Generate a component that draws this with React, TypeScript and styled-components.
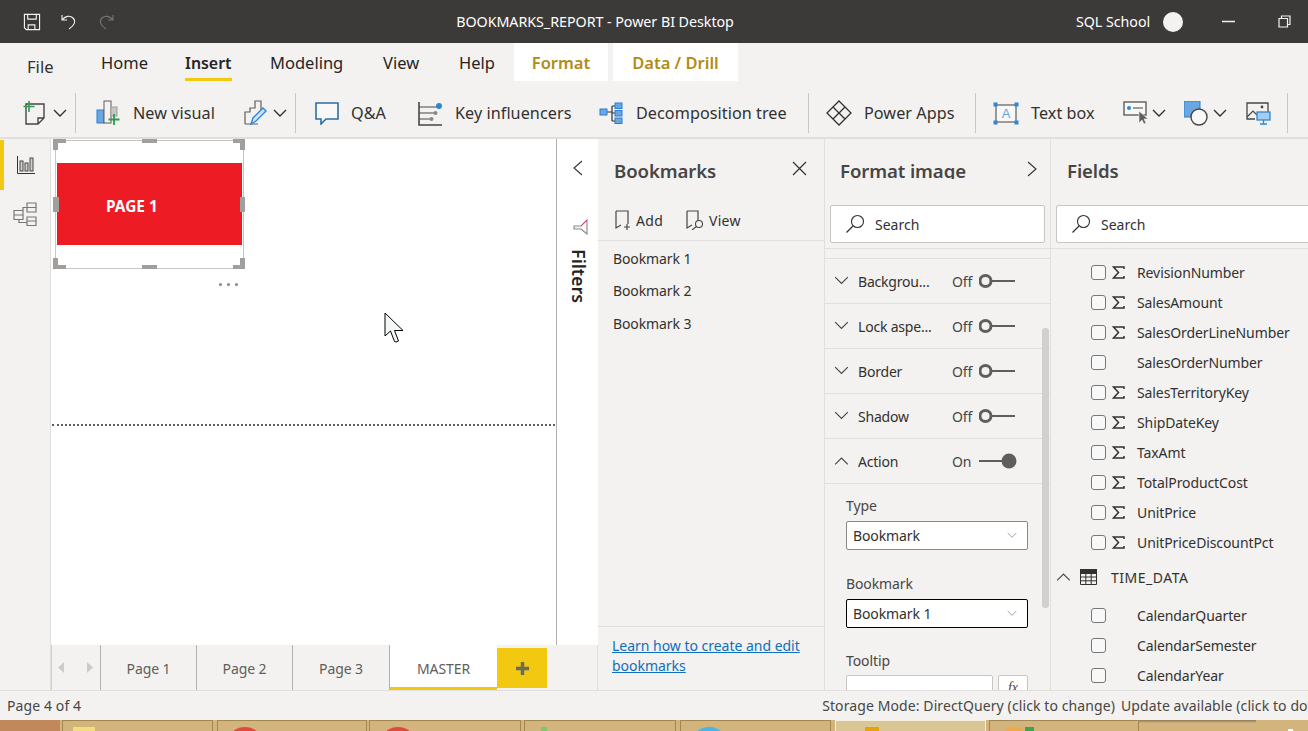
import React from "react";
import styled, { createGlobalStyle } from "styled-components";

const GlobalStyle = createGlobalStyle`
  html, body {
    margin: 0;
    padding: 0;
    overflow: hidden;
    background: #f3f2f1;
  }
  * {
    box-sizing: border-box;
  }
`;

const FONT = `"Noto Sans", "Open Sans", "Liberation Sans", sans-serif`;

const Page = styled.div`
  width: 1308px;
  height: 731px;
  display: flex;
  flex-direction: column;
  overflow: hidden;
  font-family: ${FONT};
  color: #252423;
  background: #f3f2f1;
`;

// ---------------------- title bar ---------------------- //

const TitleBar = styled.div`
  height: 43px;
  flex: none;
  display: flex;
  align-items: center;
  background: #3b3a39;
  color: #fff;
`;

const QuickIcon = styled.svg<{ $ml: number }>`
  margin-left: ${(p) => p.$ml}px;
  flex: none;
`;

const WindowTitle = styled.div`
  width: 280px;
  margin-left: 340px;
  font-size: 14.3px;
  letter-spacing: -0.05px;
  text-align: center;
  white-space: nowrap;
`;

const UserName = styled.div`
  margin-left: auto;
  width: 76px;
  font-size: 14.2px;
  white-space: nowrap;
`;

const Avatar = styled.div`
  width: 20px;
  height: 20px;
  margin-left: 11px;
  margin-right: 39px;
  border-radius: 50%;
  background: #f3f2f1;
`;

const RestoreSlot = styled.div`
  margin: 0 17px 0 43px;
  display: flex;
`;

// ---------------------- ribbon ---------------------- //

const TabRow = styled.div`
  height: 50px;
  flex: none;
  display: flex;
  align-items: flex-start;
`;

const FileTab = styled.div`
  width: 47px;
  margin: 13px 0 0 27px;
  font-size: 16.6px;
  color: #323130;
  line-height: 22px;
`;

const RibbonTab = styled.div<{ $ml: number; $w: number; $active?: boolean }>`
  margin-left: ${(p) => p.$ml}px;
  width: ${(p) => p.$w}px;
  padding-top: 9px;
  height: 38px;
  font-size: ${(p) => (p.$active ? 15.9 : 16.5)}px;
  line-height: 22px;
  color: #252423;
  white-space: nowrap;
  font-weight: ${(p) => (p.$active ? 600 : 400)};
  border-bottom: 3px solid ${(p) => (p.$active ? "#f2c811" : "transparent")};
`;

const ContextTab = styled.div<{ $w: number; $ml: number }>`
  width: ${(p) => p.$w}px;
  margin-left: ${(p) => p.$ml}px;
  height: 38px;
  padding-top: 9px;
  background: #fff;
  color: #b08c14;
  font-size: 16.5px;
  font-weight: 600;
  line-height: 22px;
  text-align: center;
  white-space: nowrap;
`;

const ToolBar = styled.div`
  height: 46px;
  flex: none;
  display: flex;
  align-items: center;
  border-bottom: 2px solid #e1dfdd;
  padding-bottom: 4px;
`;

const ToolIcon = styled.svg<{ $ml: number }>`
  margin-left: ${(p) => p.$ml}px;
  flex: none;
`;

const ToolLabel = styled.span<{ $ml: number; $w: number }>`
  margin-left: ${(p) => p.$ml}px;
  width: ${(p) => p.$w}px;
  flex: none;
  font-size: 16.2px;
  line-height: 22px;
  letter-spacing: 0.05px;
  white-space: nowrap;
  color: #323130;
`;

const ToolSep = styled.div<{ $ml: number }>`
  margin-left: ${(p) => p.$ml}px;
  width: 1px;
  height: 40px;
  flex: none;
  background: #c8c6c4;
`;

// ---------------------- main area ---------------------- //

const Main = styled.div`
  flex: none;
  height: 551px;
  display: flex;
`;

const Rail = styled.div`
  width: 51px;
  flex: none;
  padding-top: 1px;
  border-right: 1px solid #e1dfdd;
  display: flex;
  flex-direction: column;
`;

const RailItem = styled.div<{ $active?: boolean }>`
  height: ${(p) => (p.$active ? 50 : 48)}px;
  display: flex;
  align-items: center;
  justify-content: center;
  padding-right: ${(p) => (p.$active ? 2 : 0)}px;
  border-left: ${(p) => (p.$active ? "4px solid #f2c811" : "none")};
`;

const ReportColumn = styled.div`
  width: 547px;
  flex: none;
  display: flex;
  flex-direction: column;
`;

const CanvasRow = styled.div`
  flex: 1;
  display: flex;
  min-height: 0;
`;

const Canvas = styled.div`
  position: relative;
  width: 505px;
  flex: none;
  background: #fff;
  overflow: hidden;
`;

const ImageVisual = styled.div`
  position: absolute;
  left: 4px;
  top: 1px;
  width: 189px;
  height: 129px;
  border: 1px solid #c8c6c4;
`;

const RedBanner = styled.div`
  position: absolute;
  left: 1px;
  right: 1px;
  top: 22px;
  height: 82px;
  background: #ed1c24;
  color: #fff;
  font-size: 15.4px;
  font-weight: 700;
  line-height: 88px;
  padding-left: 49px;
  white-space: nowrap;
`;

const Handle = styled.div<{ $x: number; $y: number; $w: number; $h: number }>`
  position: absolute;
  left: ${(p) => p.$x}px;
  top: ${(p) => p.$y}px;
  width: ${(p) => p.$w}px;
  height: ${(p) => p.$h}px;
  background: #a19f9d;
`;

const MoreDots = styled.div`
  position: absolute;
  left: 168px;
  top: 144px;
  display: flex;
  gap: 5px;
`;

const Dot = styled.span`
  width: 3px;
  height: 3px;
  border-radius: 50%;
  background: #8a8886;
`;

const PageGuide = styled.div`
  position: absolute;
  left: 1px;
  right: 1px;
  top: 285px;
  border-top: 2px dotted #605e5c;
`;

const Cursor = styled.svg`
  position: absolute;
  left: 333px;
  top: 173px;
`;

const FiltersStrip = styled.div`
  width: 42px;
  flex: none;
  background: #fff;
  border-left: 1px solid #b3b0ad;
  display: flex;
  flex-direction: column;
  align-items: center;
  padding-top: 21px;
`;

const FiltersLabel = styled.div`
  margin-top: 14px;
  margin-left: 2px;
  writing-mode: vertical-rl;
  font-size: 17.9px;
  font-weight: 600;
  line-height: 20px;
  color: #252423;
`;

const PageTabs = styled.div`
  height: 45px;
  flex: none;
  display: flex;
  align-items: stretch;
  border-left: 1px solid #d2d0ce;
  border-right: 1px solid #e1dfdd;
`;

const PagerArrows = styled.div`
  width: 48px;
  flex: none;
  display: flex;
  align-items: center;
  justify-content: space-between;
  padding: 0 7px 0 6px;
`;

const PageTab = styled.div<{ $w: number; $active?: boolean }>`
  width: ${(p) => p.$w}px;
  flex: none;
  display: flex;
  align-items: center;
  justify-content: center;
  padding-top: ${(p) => (p.$active ? 4 : 2)}px;
  font-size: 14px;
  letter-spacing: -0.1px;
  color: #605e5c;
  border-left: 1px solid #b3b0ad;
  background: ${(p) => (p.$active ? "#fff" : "transparent")};
  border-bottom: ${(p) => (p.$active ? "3px solid #f2c811" : "none")};
`;

const AddPage = styled.div`
  width: 50px;
  height: 40px;
  margin-top: 3px;
  flex: none;
  display: flex;
  align-items: center;
  justify-content: center;
  background: #f2c811;
`;

// ---------------------- bookmarks pane ---------------------- //

const BookmarksPane = styled.div`
  width: 227px;
  flex: none;
  display: flex;
  flex-direction: column;
  border-right: 1px solid #e1dfdd;
`;

const PaneHeader = styled.div`
  height: 66px;
  flex: none;
  position: relative;
  display: flex;
  align-items: flex-start;
  justify-content: space-between;
  padding-top: 17px;
`;

const PaneTitle = styled.div<{ $ml: number }>`
  margin-left: ${(p) => p.$ml}px;
  height: 22px;
  overflow: hidden;
  font-size: 18.6px;
  font-weight: 600;
  line-height: 27px;
  letter-spacing: -0.1px;
  margin-top: 1px;
  color: #484644;
  white-space: nowrap;
`;

const HeaderIcon = styled.svg<{ $mr: number }>`
  margin-right: ${(p) => p.$mr}px;
  margin-top: 5px;
  flex: none;
`;

const BookmarkActions = styled.div`
  height: 36px;
  flex: none;
  display: flex;
  align-items: flex-start;
  padding: 5px 0 0 17px;
  border-bottom: 1px solid #e1dfdd;
`;

const ActionLabel = styled.span<{ $w: number }>`
  width: ${(p) => p.$w}px;
  margin-left: 5px;
  padding-top: 1px;
  font-size: 14px;
  line-height: 20px;
  letter-spacing: 0.3px;
  white-space: nowrap;
  color: #323130;
`;

const BookmarkList = styled.div`
  flex: 1;
  padding-top: 2px;
  min-height: 0;
`;

const BookmarkRow = styled.div`
  height: 32.4px;
  padding-left: 15px;
  font-size: 14px;
  letter-spacing: -0.1px;
  line-height: 32px;
  color: #323130;
`;

const LearnLink = styled.a`
  display: block;
  height: 64px;
  flex: none;
  padding: 9px 10px 0 14px;
  border-top: 1px solid #e1dfdd;
  font-size: 14px;
  letter-spacing: -0.02px;
  line-height: 20px;
  color: #106ebe;
  text-decoration: underline;
`;

// ---------------------- format pane ---------------------- //

const FormatPane = styled.div`
  width: 226px;
  flex: none;
  display: flex;
  flex-direction: column;
  border-right: 1px solid #e1dfdd;
`;

const SearchBox = styled.div<{ $w: number; $ml: number }>`
  width: ${(p) => p.$w}px;
  margin-left: ${(p) => p.$ml}px;
  height: 38px;
  flex: none;
  display: flex;
  align-items: center;
  gap: 10px;
  padding-left: 14px;
  background: #fff;
  border: 1px solid #c8c6c4;
  border-radius: 2px;
  font-size: 14px;
  color: #323130;
`;

const SearchGap = styled.div`
  height: 6px;
  flex: none;
  border-bottom: 1px solid #e1dfdd;
`;

const FormatScroll = styled.div`
  position: relative;
  flex: 1;
  min-height: 0;
  overflow: hidden;
`;

const FormatTopGap = styled.div`
  height: 10px;
  border-bottom: 1px solid #e1dfdd;
`;

const CardRow = styled.div`
  height: 45px;
  display: flex;
  align-items: center;
  padding-left: 9px;
  border-bottom: 1px solid #e1dfdd;
`;

const CardName = styled.span`
  width: 94px;
  margin-left: 9px;
  font-size: 14px;
  letter-spacing: -0.2px;
  white-space: nowrap;
  color: #323130;
`;

const OnOff = styled.span`
  width: 27px;
  font-size: 14px;
  letter-spacing: -0.1px;
  color: #484644;
`;

const Toggle = styled.svg`
  flex: none;
`;

const ActionBody = styled.div`
  padding: 12px 0 0 21px;
`;

const FieldLabel = styled.div<{ $mt?: number }>`
  margin-top: ${(p) => p.$mt ?? 0}px;
  font-size: 14px;
  letter-spacing: -0.1px;
  line-height: 20px;
  color: #484644;
`;

const SelectBox = styled.div<{ $focus?: boolean }>`
  width: 182px;
  height: 29px;
  margin-top: 5px;
  display: flex;
  align-items: center;
  justify-content: space-between;
  padding: 0 10px 0 6px;
  background: #fff;
  border: 1px solid ${(p) => (p.$focus ? "#000" : "#8a8886")};
  border-radius: 2px;
  font-size: 14px;
  letter-spacing: -0.1px;
  color: #323130;
`;

const TooltipRow = styled.div`
  display: flex;
  gap: 5px;
  margin-top: 4px;
`;

const TooltipInput = styled.div`
  width: 147px;
  height: 30px;
  background: #fff;
  border: 1px solid #c8c6c4;
  border-radius: 2px;
`;

const FxButton = styled.div`
  width: 30px;
  height: 30px;
  background: #fff;
  border: 1px solid #c8c6c4;
  border-radius: 2px;
  text-align: center;
  font-family: "Liberation Serif", serif;
  font-style: italic;
  font-size: 14px;
  line-height: 24px;
  color: #484644;
`;

const ScrollThumb = styled.div`
  position: absolute;
  right: 1px;
  top: 79px;
  width: 7px;
  height: 280px;
  border-radius: 3px;
  background: #d2d0ce;
`;

// ---------------------- fields pane ---------------------- //

const FieldsPane = styled.div`
  flex: 1;
  min-width: 0;
  display: flex;
  flex-direction: column;
  overflow: hidden;
`;

const FieldsList = styled.div`
  flex: 1;
  min-height: 0;
  overflow: hidden;
  padding-top: 8px;
`;

const FieldRow = styled.div`
  height: 30px;
  display: flex;
  align-items: center;
  padding-left: 40px;
`;

const CheckBox = styled.div`
  width: 15px;
  height: 15px;
  flex: none;
  border: 1px solid #797775;
  border-radius: 3px;
  background: #f8f8f8;
`;

const SigmaSlot = styled.div`
  width: 31px;
  padding-left: 6px;
  flex: none;
  display: flex;
`;

const FieldName = styled.span`
  font-size: 14px;
  letter-spacing: -0.1px;
  white-space: nowrap;
  color: #323130;
`;

const TableRow = styled.div`
  height: 40px;
  margin-bottom: 3px;
  display: flex;
  align-items: center;
  padding-left: 5px;
`;

const TableName = styled.span`
  margin-left: 14px;
  font-size: 14px;
  letter-spacing: 0.5px;
  color: #323130;
`;

// ---------------------- status + taskbar ---------------------- //

const StatusBar = styled.div`
  height: 30px;
  flex: none;
  display: flex;
  align-items: center;
  border-top: 1px solid #e1dfdd;
  padding-left: 7px;
  font-size: 14px;
  letter-spacing: 0.1px;
  color: #484644;
  white-space: nowrap;
  overflow: hidden;
`;

const StatusRight = styled.div`
  margin-left: 741px;
  display: flex;
  gap: 6px;
`;

const TaskBar = styled.div`
  position: relative;
  height: 11px;
  flex: none;
  display: flex;
  background: #d2b47c;
  overflow: hidden;
`;

const StartCorner = styled.div`
  width: 60px;
  flex: none;
  background: #c1885c;
`;

const TaskItem = styled.div<{ $w: number; $ml: number; $active?: boolean }>`
  position: relative;
  width: ${(p) => p.$w}px;
  margin-left: ${(p) => p.$ml}px;
  height: 14px;
  flex: none;
  border: 1px solid ${(p) => (p.$active ? "#f5efe0" : "#a08850")};
  background: ${(p) => (p.$active ? "#d8c794" : "#d2b47c")};
`;

const TaskGlyph = styled.div<{ $x: number; $w: number; $c: string; $round?: boolean }>`
  position: absolute;
  left: ${(p) => p.$x}px;
  top: 6px;
  width: ${(p) => p.$w}px;
  height: 16px;
  background: ${(p) => p.$c};
  border-radius: ${(p) => (p.$round ? "50%" : "0")};
`;

const WindowShadow = styled.div`
  position: absolute;
  left: 1139px;
  top: 0;
  width: 117px;
  height: 3px;
  background: linear-gradient(#8c7a52, rgba(140, 122, 82, 0));
`;

const ClockTip = styled.div`
  position: absolute;
  left: 1288px;
  bottom: 0;
  width: 5px;
  height: 2px;
  background: #fff;
`;

// -------------------------------------------------------------------- //

const Chevron = ({ size = 14, up = false, color = "#323130" }: { size?: number; up?: boolean; color?: string }) => (
  <svg width={size} height={size / 2 + 2} viewBox="0 0 14 9" style={{ flex: "none" }}>
    <path d={up ? "M1 8L7 2l6 6" : "M1 1l6 6 6-6"} fill="none" stroke={color} strokeWidth="1.1" />
  </svg>
);

const SearchIcon = () => (
  <svg width="20" height="20" viewBox="0 0 20 20" style={{ flex: "none" }}>
    <circle cx="12.5" cy="7.5" r="6" fill="none" stroke="#323130" strokeWidth="1.1" />
    <path d="M8 12L1.5 18.5" stroke="#323130" strokeWidth="1.3" />
  </svg>
);

const Sigma = () => (
  <svg width="13" height="13" viewBox="0 0 13 13">
    <path d="M12 3V1H1.5l5 5.5-5 5.5H12V10" fill="none" stroke="#323130" strokeWidth="1.5" />
  </svg>
);

const OffToggle = () => (
  <Toggle width="36" height="16" viewBox="0 0 36 16">
    <path d="M12 8h24" stroke="#605e5c" strokeWidth="2" />
    <circle cx="6.5" cy="8" r="5.5" fill="#f3f2f1" stroke="#605e5c" strokeWidth="3" />
  </Toggle>
);

const OnToggle = () => (
  <Toggle width="38" height="16" viewBox="0 0 38 16">
    <path d="M0 8h24" stroke="#605e5c" strokeWidth="2" />
    <circle cx="30" cy="8" r="7.5" fill="#605e5c" />
  </Toggle>
);

const cards = [
  { name: "Backgrou..." },
  { name: "Lock aspe..." },
  { name: "Border" },
  { name: "Shadow" },
];

const measures = [
  { name: "RevisionNumber", sum: true },
  { name: "SalesAmount", sum: true },
  { name: "SalesOrderLineNumber", sum: true },
  { name: "SalesOrderNumber", sum: false },
  { name: "SalesTerritoryKey", sum: true },
  { name: "ShipDateKey", sum: true },
  { name: "TaxAmt", sum: true },
  { name: "TotalProductCost", sum: true },
  { name: "UnitPrice", sum: true },
  { name: "UnitPriceDiscountPct", sum: true },
];

const timeFields = ["CalendarQuarter", "CalendarSemester", "CalendarYear"];

const handles = [
  // corners
  { x: -3, y: -2, w: 13, h: 4 },
  { x: -3, y: -2, w: 5, h: 11 },
  { x: 177, y: -2, w: 12, h: 4 },
  { x: 184, y: -2, w: 5, h: 11 },
  { x: -3, y: 124, w: 13, h: 4 },
  { x: -3, y: 117, w: 5, h: 11 },
  { x: 177, y: 124, w: 12, h: 4 },
  { x: 184, y: 117, w: 5, h: 11 },
  // edges
  { x: 86, y: -2, w: 15, h: 4 },
  { x: 86, y: 124, w: 15, h: 4 },
  { x: -3, y: 56, w: 6, h: 15 },
  { x: 184, y: 56, w: 5, h: 15 },
];

const App = () => {
  return (
    <Page>
      <GlobalStyle />
      <TitleBar>
        <QuickIcon $ml={23} width="18" height="18" viewBox="0 0 19 19">
          <path d="M1.5 1.5h16v16h-14l-2-2z M5 1.5v5h9v-5 M5.5 17.5v-5h7v5" fill="none" stroke="#f3f2f1" strokeWidth="1.2" />
        </QuickIcon>
        <QuickIcon $ml={19} width="18" height="18" viewBox="0 0 18 18">
          <path d="M2 2v5h5 M2 7c3-4 8-5 11-2 3 3 2 7-4 11" fill="none" stroke="#f3f2f1" strokeWidth="1.1" />
        </QuickIcon>
        <QuickIcon $ml={19} width="18" height="18" viewBox="0 0 18 18">
          <path d="M16 2v5h-5 M16 7c-3-4-8-5-11-2-3 3-2 7 4 11" fill="none" stroke="#797775" strokeWidth="1.1" />
        </QuickIcon>
        <WindowTitle>BOOKMARKS_REPORT - Power BI Desktop</WindowTitle>
        <UserName>SQL School</UserName>
        <Avatar />
        <svg width="13" height="3" viewBox="0 0 13 3" style={{ flex: "none" }}>
          <path d="M0 1.500h13" stroke="#f3f2f1" strokeWidth="1.5" />
        </svg>
        <RestoreSlot>
          <svg width="13" height="13" viewBox="0 0 13 13">
            <path d="M3.5 3V1h8.5v8.5h-2.5 M1 3.5h8.5V12H1z" fill="none" stroke="#f3f2f1" strokeWidth="1.2" />
          </svg>
        </RestoreSlot>
      </TitleBar>

      <TabRow>
        <FileTab>File</FileTab>
        <RibbonTab $ml={27} $w={47}>Home</RibbonTab>
        <RibbonTab $ml={37} $w={47} $active>Insert</RibbonTab>
        <RibbonTab $ml={38} $w={74}>Modeling</RibbonTab>
        <RibbonTab $ml={39} $w={38}>View</RibbonTab>
        <RibbonTab $ml={38} $w={36}>Help</RibbonTab>
        <ContextTab $ml={19} $w={94}>Format</ContextTab>
        <ContextTab $ml={5} $w={125}>Data / Drill</ContextTab>
      </TabRow>

      <ToolBar>
        <ToolIcon $ml={22} width="25" height="26" viewBox="0 0 25 26">
          <path d="M4 4h18v14l-6 6H4z M22 18h-6v6" fill="#f3f2f1" stroke="#484644" strokeWidth="1.4" />
          <path d="M7 1v11 M1.5 6.5h11" stroke="#2e9b4d" strokeWidth="1.6" />
        </ToolIcon>
        <ToolIcon $ml={6} width="14" height="9" viewBox="0 0 14 9">
          <path d="M1 1l6 6 6-6" fill="none" stroke="#323130" strokeWidth="1.4" />
        </ToolIcon>
        <ToolSep $ml={8} />
        <ToolIcon $ml={20} width="25" height="26" viewBox="0 0 25 26">
          <rect x="1" y="10" width="7" height="13" fill="#69a7e0" stroke="#2b7cd3" />
          <rect x="8" y="1" width="7" height="22" fill="#f3f2f1" stroke="#605e5c" />
          <rect x="15" y="7" width="6" height="9" fill="#c8c6c4" stroke="#a19f9d" />
          <path d="M18 14v11 M12.5 19.5h11" stroke="#2e9b4d" strokeWidth="1.8" />
        </ToolIcon>
        <ToolLabel $ml={12} $w={111}>New visual</ToolLabel>
        <ToolIcon $ml={0} width="24" height="26" viewBox="0 0 24 26">
          <path d="M1 24V12h5V8h5V1h6v12 M1 24h13" fill="none" stroke="#605e5c" strokeWidth="1.2" />
          <path d="M7 24l2-6L19 8l3 3-10 10z" fill="#cfe3f5" stroke="#2b88d8" strokeWidth="1.4" />
        </ToolIcon>
        <ToolIcon $ml={5} width="14" height="9" viewBox="0 0 14 9">
          <path d="M1 1l6 6 6-6" fill="none" stroke="#323130" strokeWidth="1.4" />
        </ToolIcon>
        <ToolSep $ml={8} />
        <ToolIcon $ml={19} width="24" height="23" viewBox="0 0 24 23">
          <path d="M1 1h22v16H11l-5 5v-5H1z" fill="#f8f8f8" stroke="#2b6ea8" strokeWidth="1.6" />
        </ToolIcon>
        <ToolLabel $ml={12} $w={67}>Q&amp;A</ToolLabel>
        <ToolIcon $ml={0} width="25" height="25" viewBox="0 0 25 25">
          <path d="M1 1v23h23" fill="none" stroke="#484644" strokeWidth="1.6" />
          <path d="M1 6h18 M1 12h15 M1 18h11" stroke="#484644" strokeWidth="1.2" />
          <circle cx="21" cy="5" r="3" fill="#2b88d8" />
          <circle cx="17.5" cy="12" r="2" fill="#8a8886" />
          <circle cx="13.5" cy="18" r="2" fill="#8a8886" />
        </ToolIcon>
        <ToolLabel $ml={12} $w={144}>Key influencers</ToolLabel>
        <ToolIcon $ml={0} width="24" height="23" viewBox="0 0 24 23">
          <path d="M8 10h5 M13 4v15 M13 4h3 M13 11h3 M13 19h3" fill="none" stroke="#323130" strokeWidth="1.2" />
          <rect x="1" y="7" width="7" height="6" fill="#69a7e0" stroke="#2b7cd3" />
          <rect x="16" y="1" width="7" height="5.5" fill="#69a7e0" stroke="#2b7cd3" />
          <rect x="16" y="8.5" width="7" height="5.5" fill="#69a7e0" stroke="#2b7cd3" />
          <rect x="16" y="16" width="7" height="5.5" fill="#69a7e0" stroke="#2b7cd3" />
        </ToolIcon>
        <ToolLabel $ml={13} $w={172}>Decomposition tree</ToolLabel>
        <ToolSep $ml={0} />
        <ToolIcon $ml={17} width="26" height="26" viewBox="0 0 26 26">
          <path d="M13 1l6 6-6 6-6-6z M7 7l-6 6 6 6 6-6 6 6 6-6-6-6 M7 19l6 6 6-6" fill="none" stroke="#323130" strokeWidth="1.3" />
        </ToolIcon>
        <ToolLabel $ml={12} $w={111}>Power Apps</ToolLabel>
        <ToolSep $ml={0} />
        <ToolIcon $ml={17} width="26" height="23" viewBox="0 0 26 23">
          <rect x="3" y="3" width="20" height="17" fill="#f8f8f8" stroke="#605e5c" strokeWidth="1.2" />
          <rect x="0.5" y="0.5" width="4" height="4" fill="#2b88d8" />
          <rect x="21.5" y="0.5" width="4" height="4" fill="#2b88d8" />
          <rect x="0.5" y="18.5" width="4" height="4" fill="#2b88d8" />
          <rect x="21.5" y="18.5" width="4" height="4" fill="#2b88d8" />
          <text x="13" y="16" fontSize="13" textAnchor="middle" fill="#5ca4e0" fontFamily="Liberation Sans">A</text>
        </ToolIcon>
        <ToolLabel $ml={12} $w={92}>Text box</ToolLabel>
        <ToolIcon $ml={0} width="27" height="24" viewBox="0 0 27 24">
          <rect x="1" y="1" width="22" height="13" fill="#f8f8f8" stroke="#605e5c" strokeWidth="1.4" />
          <circle cx="6" cy="7" r="2" fill="#2b88d8" />
          <path d="M10 7h10" stroke="#605e5c" strokeWidth="1.2" />
          <path d="M16 10v12l3-3 2 4 2-1-2-4h4z" fill="#605e5c" stroke="#f3f2f1" strokeWidth="0.6" />
        </ToolIcon>
        <ToolIcon $ml={2} width="14" height="9" viewBox="0 0 14 9">
          <path d="M1 1l6 6 6-6" fill="none" stroke="#323130" strokeWidth="1.4" />
        </ToolIcon>
        <ToolIcon $ml={18} width="24" height="25" viewBox="0 0 24 25">
          <rect x="0" y="0" width="16" height="16" fill="#69a7e0" stroke="#2b7cd3" />
          <circle cx="15" cy="16" r="8" fill="#f8f8f8" stroke="#484644" strokeWidth="1.4" />
        </ToolIcon>
        <ToolIcon $ml={5} width="14" height="9" viewBox="0 0 14 9">
          <path d="M1 1l6 6 6-6" fill="none" stroke="#323130" strokeWidth="1.4" />
        </ToolIcon>
        <ToolIcon $ml={19} width="25" height="23" viewBox="0 0 25 23">
          <path d="M9 17H1V1h21v9" fill="none" stroke="#484644" strokeWidth="1.3" />
          <path d="M1 15l6-6 4 4" fill="none" stroke="#484644" strokeWidth="1.2" />
          <circle cx="16" cy="5" r="1.4" fill="#484644" />
          <rect x="11" y="10" width="13" height="8" fill="#a6cdee" stroke="#2b88d8" strokeWidth="1.3" />
          <path d="M17.5 18v4 M14 22h7" stroke="#2b88d8" strokeWidth="1.3" />
        </ToolIcon>
        <ToolSep $ml={16} />
      </ToolBar>

      <Main>
        <Rail>
          <RailItem $active>
            <svg width="18" height="18" viewBox="0 0 18 18">
              <path d="M.5 0v17.5H18" fill="none" stroke="#323130" />
              <rect x="3" y="5" width="3" height="10" fill="#d2d0ce" stroke="#484644" />
              <rect x="8" y="7" width="3" height="8" fill="#d2d0ce" stroke="#484644" />
              <rect x="13" y="2" width="3" height="13" fill="#d2d0ce" stroke="#484644" />
            </svg>
          </RailItem>
          <RailItem>
            <svg width="24" height="24" viewBox="0 0 24 24">
              <path d="M1 8.5h9v9H1z M1 13h9 M14 1h9v9h-9z M14 5.500h9 M14 15h9v8.500h-9z M14 19h9 M10 10V5.500h4 M6 17.500v3h8" fill="#f3f2f1" stroke="#797775" strokeWidth="1.2" />
            </svg>
          </RailItem>
        </Rail>

        <ReportColumn>
          <CanvasRow>
            <Canvas>
              <ImageVisual>
                <RedBanner>PAGE 1</RedBanner>
                {handles.map((h, i) => (
                  <Handle key={i} $x={h.x} $y={h.y} $w={h.w} $h={h.h} />
                ))}
              </ImageVisual>
              <MoreDots>
                <Dot />
                <Dot />
                <Dot />
              </MoreDots>
              <PageGuide />
              <Cursor width="20" height="32" viewBox="0 0 20 32">
                <path d="M1 1v23l5.500-5 4 10.500 1.500.5 2.500-1-4-10.500H19z" fill="#f5f6f6" stroke="#000" strokeWidth="1" />
              </Cursor>
            </Canvas>
            <FiltersStrip>
              <svg width="10" height="16" viewBox="0 0 10 16">
                <path d="M9 1L1 8l8 7" fill="none" stroke="#323130" strokeWidth="1.1" />
              </svg>
              <svg width="15" height="16" viewBox="0 0 15 16" style={{ marginTop: 43, marginLeft: 5 }}>
                <path d="M14 1v14l-6-5H1V7h7z" fill="#f8f8f8" stroke="#8a8886" strokeWidth="1.1" />
                <path d="M14 1L8 7" stroke="#c43d8a" strokeWidth="1" />
              </svg>
              <FiltersLabel>Filters</FiltersLabel>
            </FiltersStrip>
          </CanvasRow>
          <PageTabs>
            <PagerArrows>
              <svg width="6" height="11" viewBox="0 0 6 11"><path d="M6 0v11L0 5.500z" fill="#c8ccd0" /></svg>
              <svg width="6" height="11" viewBox="0 0 6 11"><path d="M0 0v11l6-5.500z" fill="#c8ccd0" /></svg>
            </PagerArrows>
            <PageTab $w={96}>Page 1</PageTab>
            <PageTab $w={96}>Page 2</PageTab>
            <PageTab $w={97}>Page 3</PageTab>
            <PageTab $w={108} $active>MASTER</PageTab>
            <AddPage>
              <svg width="15" height="15" viewBox="0 0 15 15">
                <path d="M7.500 1v13 M1 7.500h13" stroke="#6b6a60" strokeWidth="3.4" />
              </svg>
            </AddPage>
          </PageTabs>
        </ReportColumn>

        <BookmarksPane>
          <PaneHeader>
            <PaneTitle $ml={16}>Bookmarks</PaneTitle>
            <HeaderIcon $mr={17} width="15" height="15" viewBox="0 0 15 15">
              <path d="M1 1l13 13 M14 1L1 14" stroke="#323130" strokeWidth="1.2" />
            </HeaderIcon>
          </PaneHeader>
          <BookmarkActions>
            <svg width="16" height="20" viewBox="0 0 16 20" style={{ flex: "none" }}>
              <path d="M1 1h12v13 M1 1v17l5-3" fill="none" stroke="#484644" strokeWidth="1.2" />
              <path d="M12 14v6 M9 17h6" stroke="#484644" strokeWidth="1.2" />
            </svg>
            <ActionLabel $w={50}>Add</ActionLabel>
            <svg width="18" height="20" viewBox="0 0 18 20" style={{ flex: "none" }}>
              <path d="M1 1h11v10 M1 1v17l5-3" fill="none" stroke="#484644" strokeWidth="1.2" />
              <circle cx="13" cy="14" r="3.500" fill="none" stroke="#484644" strokeWidth="1.1" />
              <path d="M10.500 16.500L6 20" stroke="#484644" strokeWidth="1.1" />
            </svg>
            <ActionLabel $w={40}>View</ActionLabel>
          </BookmarkActions>
          <BookmarkList>
            <BookmarkRow>Bookmark 1</BookmarkRow>
            <BookmarkRow>Bookmark 2</BookmarkRow>
            <BookmarkRow>Bookmark 3</BookmarkRow>
          </BookmarkList>
          <LearnLink href="#">Learn how to create and edit bookmarks</LearnLink>
        </BookmarksPane>

        <FormatPane>
          <PaneHeader>
            <PaneTitle $ml={15}>Format image</PaneTitle>
            <HeaderIcon $mr={13} width="10" height="16" viewBox="0 0 10 16">
              <path d="M1 1l8 7-8 7" fill="none" stroke="#323130" strokeWidth="1.1" />
            </HeaderIcon>
          </PaneHeader>
          <SearchBox $w={215} $ml={5}>
            <SearchIcon />
            Search
          </SearchBox>
          <SearchGap />
          <FormatScroll>
            <FormatTopGap />
            {cards.map((c) => (
              <CardRow key={c.name}>
                <Chevron size={15} color="#484644" />
                <CardName>{c.name}</CardName>
                <OnOff>Off</OnOff>
                <OffToggle />
              </CardRow>
            ))}
            <CardRow>
              <Chevron size={15} up color="#484644" />
              <CardName>Action</CardName>
              <OnOff>On</OnOff>
              <OnToggle />
            </CardRow>
            <ActionBody>
              <FieldLabel>Type</FieldLabel>
              <SelectBox>
                Bookmark
                <Chevron size={10} color="#8a8886" />
              </SelectBox>
              <FieldLabel $mt={24}>Bookmark</FieldLabel>
              <SelectBox $focus>
                Bookmark 1
                <Chevron size={10} color="#8a8886" />
              </SelectBox>
              <FieldLabel $mt={23}>Tooltip</FieldLabel>
              <TooltipRow>
                <TooltipInput />
                <FxButton>fx</FxButton>
              </TooltipRow>
            </ActionBody>
            <ScrollThumb />
          </FormatScroll>
        </FormatPane>

        <FieldsPane>
          <PaneHeader>
            <PaneTitle $ml={16}>Fields</PaneTitle>
          </PaneHeader>
          <SearchBox $w={270} $ml={5}>
            <SearchIcon />
            Search
          </SearchBox>
          <SearchGap />
          <FieldsList>
            {measures.map((m) => (
              <FieldRow key={m.name}>
                <CheckBox />
                <SigmaSlot>{m.sum && <Sigma />}</SigmaSlot>
                <FieldName>{m.name}</FieldName>
              </FieldRow>
            ))}
            <TableRow>
              <Chevron size={15} up color="#484644" />
              <svg width="17" height="16" viewBox="0 0 17 16" style={{ marginLeft: 9, flex: "none" }}>
                <path d="M.5.5h16v15H.5z M.5 4.500h16 M.5 8h16 M.5 11.800h16 M5.800 4.500v11 M11.200 4.500v11" fill="none" stroke="#323130" />
                <path d="M0 0h17v4H0z" fill="#323130" />
              </svg>
              <TableName>TIME_DATA</TableName>
            </TableRow>
            {timeFields.map((name) => (
              <FieldRow key={name}>
                <CheckBox />
                <SigmaSlot />
                <FieldName>{name}</FieldName>
              </FieldRow>
            ))}
          </FieldsList>
        </FieldsPane>
      </Main>

      <StatusBar>
        <span>Page 4 of 4</span>
        <StatusRight>
          <span>Storage Mode: DirectQuery (click to change)</span>
          <span>Update available (click to download)</span>
        </StatusRight>
      </StatusBar>

      <TaskBar>
        <StartCorner />
        <TaskItem $ml={2} $w={151}>
          <TaskGlyph $x={10} $w={22} $c="#f3dc7a" />
        </TaskItem>
        <TaskItem $ml={4} $w={150}>
          <TaskGlyph $x={14} $w={26} $c="#de4b3e" $round />
        </TaskItem>
        <TaskItem $ml={2} $w={152}>
          <TaskGlyph $x={15} $w={26} $c="#de4b3e" $round />
        </TaskItem>
        <TaskItem $ml={3} $w={152}>
          <TaskGlyph $x={16} $w={6} $c="#7bc96f" />
        </TaskItem>
        <TaskItem $ml={4} $w={151}>
          <TaskGlyph $x={15} $w={26} $c="#4ab4e6" $round />
        </TaskItem>
        <TaskItem $ml={4} $w={151} $active>
          <TaskGlyph $x={29} $w={14} $c="#e5a50a" />
        </TaskItem>
        <TaskItem $ml={3} $w={150}>
          <TaskGlyph $x={13} $w={22} $c="#f0a848" $round />
          <TaskGlyph $x={35} $w={9} $c="#3fa34d" />
        </TaskItem>
        <WindowShadow />
        <ClockTip />
      </TaskBar>
    </Page>
  );
};

export default App;
